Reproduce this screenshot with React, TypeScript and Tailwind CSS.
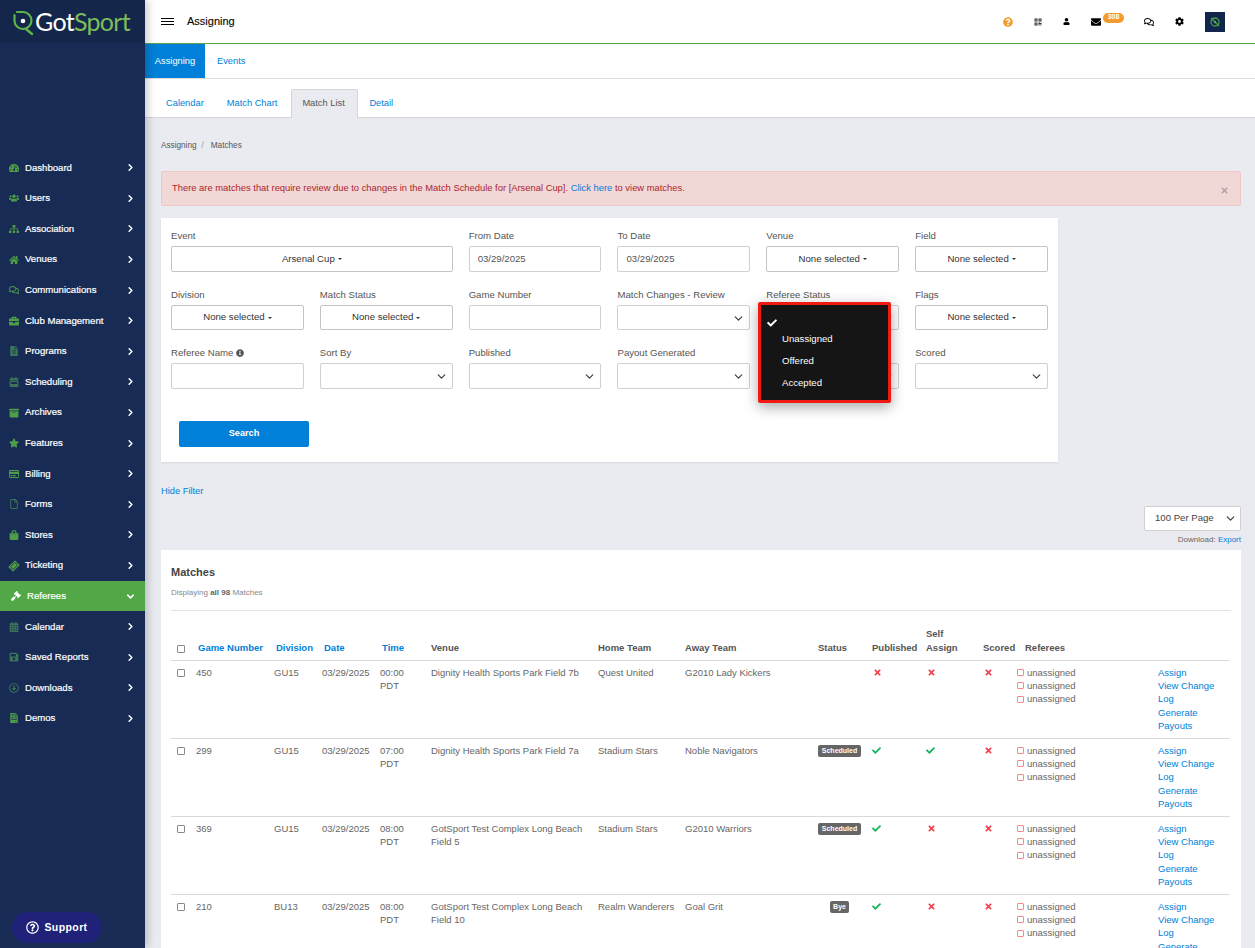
import React from 'react';
import { ChevronDown, ChevronRight } from 'lucide-react';
import {
  FaTachometerAlt, FaUsers, FaSitemap, FaHome, FaRegComments, FaBriefcase, FaFileAlt, FaCalendarWeek,
  FaArchive, FaStar, FaRegCreditCard, FaRegFile, FaShoppingBag, FaTicketAlt, FaGavel, FaCalendarAlt,
  FaSave, FaRegArrowAltCircleDown, FaFileInvoice, FaQuestionCircle, FaQrcode, FaUser, FaEnvelope, FaCog,
  FaCheck, FaTimes, FaInfoCircle, FaRegQuestionCircle,
} from 'react-icons/fa';

const NAV = [
  { label: 'Dashboard', icon: FaTachometerAlt },
  { label: 'Users', icon: FaUsers },
  { label: 'Association', icon: FaSitemap },
  { label: 'Venues', icon: FaHome },
  { label: 'Communications', icon: FaRegComments },
  { label: 'Club Management', icon: FaBriefcase },
  { label: 'Programs', icon: FaFileAlt, dim: true },
  { label: 'Scheduling', icon: FaCalendarWeek, dim: true },
  { label: 'Archives', icon: FaArchive },
  { label: 'Features', icon: FaStar },
  { label: 'Billing', icon: FaRegCreditCard },
  { label: 'Forms', icon: FaRegFile, dim: true },
  { label: 'Stores', icon: FaShoppingBag },
  { label: 'Ticketing', icon: FaTicketAlt, tilt: true },
  { label: 'Referees', icon: FaGavel, active: true },
  { label: 'Calendar', icon: FaCalendarAlt, dim: true },
  { label: 'Saved Reports', icon: FaSave, dim: true },
  { label: 'Downloads', icon: FaRegArrowAltCircleDown, dim: true },
  { label: 'Demos', icon: FaFileInvoice },
];

const MATCHES = [
  { num: '450', div: 'GU15', time: '00:00', venue: 'Dignity Health Sports Park Field 7b', home: 'Quest United', away: 'G2010 Lady Kickers', status: '', pub: false, self: false },
  { num: '299', div: 'GU15', time: '07:00', venue: 'Dignity Health Sports Park Field 7a', home: 'Stadium Stars', away: 'Noble Navigators', status: 'Scheduled', pub: true, self: true },
  { num: '369', div: 'GU15', time: '08:00', venue: 'GotSport Test Complex Long Beach Field 5', home: 'Stadium Stars', away: 'G2010 Warriors', status: 'Scheduled', pub: true, self: false },
  { num: '210', div: 'BU13', time: '08:00', venue: 'GotSport Test Complex Long Beach Field 10', home: 'Realm Wanderers', away: 'Goal Grit', status: 'Bye', pub: true, self: false },
];

const Logo = () => (
  <div className="flex items-center pl-[12px]">
    <svg width="23" height="27" viewBox="0 0 23 27" fill="none">
      <path d="M5 4 H11 A8.5 8.5 0 1 1 2.5 13 V7" stroke="#5cb54a" strokeWidth="2.2" strokeLinecap="round" />
      <circle cx="11" cy="13" r="2.3" fill="#ffffff" />
      <path d="M14 21 L20 26" stroke="#5cb54a" strokeWidth="2.4" strokeLinecap="round" />
    </svg>
    <span className="text-[25px] leading-none tracking-[-0.7px] text-white font-['Lato',sans-serif]">Got</span>
    <span className="text-[25px] leading-none tracking-[-0.7px] text-[#7dbd5b] font-['Lato',sans-serif]">Sport</span>
  </div>
);

const iconTone = (item: { active?: boolean; dim?: boolean }) => {
  if (item.active) return 'text-white';
  return item.dim ? 'text-[#3c7558]' : 'text-[#4f9d48]';
};

const Sidebar = () => (
  <aside className="relative z-10 flex w-[145px] shrink-0 flex-col bg-[#172b55] shadow-[3px_0_8px_rgba(0,0,0,0.2)]">
    <div className="flex h-[43px] items-center bg-[#14274a]">
      <Logo />
    </div>
    <nav className="mt-[109.5px]">
      {NAV.map(item => {
        const Icon = item.icon;
        return (
          <div
            key={item.label}
            className={`flex h-[30.6px] items-center text-[9.6px] font-medium text-white ${item.active ? 'bg-[#52a846] pl-[11px] pr-[9px]' : 'pl-[9px] pr-[9px]'}`}
          >
            <span className={`flex w-[16px] shrink-0 justify-start ${iconTone(item)}`}>
              <Icon size={10} className={item.tilt ? '-rotate-45' : ''} />
            </span>
            <span className="flex-1 [-webkit-text-stroke:0.2px_white]">{item.label}</span>
            {item.active
              ? <ChevronDown size={11} strokeWidth={3.2} />
              : <ChevronRight size={11} strokeWidth={3.2} />}
          </div>
        );
      })}
    </nav>
    <div className="absolute bottom-[5px] left-[12px] flex h-[31px] w-[90px] items-center justify-center gap-[5px] rounded-full bg-[#20227a] text-[10.5px] font-bold tracking-[0.4px] text-white">
      <FaRegQuestionCircle size={13} />
      Support
    </div>
  </aside>
);

const TopBar = () => (
  <header className="flex h-[44px] shrink-0 items-center border-b border-[#5ba548] bg-white pl-[16px]">
    <div className="flex w-[13px] flex-col gap-[1.5px]">
      <span className="h-[1.5px] bg-black" />
      <span className="h-[1.5px] bg-black" />
      <span className="h-[1.5px] bg-black" />
    </div>
    <span className="ml-[13px] text-[11px] text-black [-webkit-text-stroke:0.1px_black]">Assigning</span>
    <div className="ml-auto flex items-center pr-[30px]">
      <FaQuestionCircle size={10} className="text-[#f39c2d]" />
      <FaQrcode size={8} className="ml-[21px] text-[#333333]" />
      <FaUser size={7} className="ml-[21px] text-black" />
      <FaEnvelope size={10} className="ml-[21px] text-black" />
      <span className="relative top-[-4px] ml-[2px] flex h-[10px] w-[21px] items-center justify-center rounded-full bg-[#f39c2d] text-[7px] font-bold text-white">308</span>
      <FaRegComments size={10} className="ml-[20px] text-black" />
      <FaCog size={9} className="ml-[21px] text-black" />
      <div className="ml-[21px] flex h-[20px] w-[20px] items-center justify-center bg-[#12264d]">
        <svg width="12" height="12" viewBox="0 0 12 12" fill="none">
          <circle cx="6" cy="6" r="4" stroke="#4f9d48" strokeWidth="1.3" />
          <circle cx="6" cy="6" r="1.2" fill="#8ab4d8" />
          <path d="M2 2 L10 10" stroke="#4f9d48" strokeWidth="1.2" />
        </svg>
      </div>
    </div>
  </header>
);

const Tabs = () => (
  <>
    <div className="flex h-[35px] shrink-0 items-stretch border-b border-[#dcdcdc] bg-white text-[9.3px]">
      <div className="flex w-[60px] items-center justify-center bg-[#0080d8] pt-[2px] text-white">Assigning</div>
      <div className="flex items-center pl-[12px] pt-[2px] text-[#0080d8]">Events</div>
    </div>
    <div className="flex h-[39px] shrink-0 items-end border-b border-[#d5d5d5] bg-white pl-[9px] text-[9.3px] text-[#0080d8]">
      <div className="flex h-[26px] items-center px-[12px]">Calendar</div>
      <div className="flex h-[26px] items-center pl-[11px] pr-[14px]">Match Chart</div>
      <div className="relative top-[1px] flex h-[29px] w-[67px] items-center rounded-t-[2px] border border-b-0 border-[#d5d5d5] bg-[#e9ebf0] pl-[10px] text-[#555555]">Match List</div>
      <div className="flex h-[26px] items-center px-[11px]">Detail</div>
    </div>
  </>
);

const Field = ({ label, className, children }: { label: React.ReactNode; className?: string; children: React.ReactNode }) => (
  <div className={className}>
    <label className="mb-[4px] block h-[13px] text-[9.6px] leading-[13px] text-[#555555]">{label}</label>
    {children}
  </div>
);

const MultiBtn = ({ text = 'None selected' }: { text?: string }) => (
  <button className="flex h-[25.5px] w-full items-center justify-center gap-[3px] rounded-[2px] border border-[#c4c4c4] bg-white text-[9.6px] text-[#333333]">
    {text}
    <span className="mt-[1px] border-x-[2px] border-t-[2px] border-x-transparent border-t-[#333333]" />
  </button>
);

const TextBox = ({ value = '' }: { value?: string }) => (
  <div className="flex h-[25.5px] items-center rounded-[2px] border border-[#d0d0d0] bg-white px-[8px] text-[9.6px] text-[#555555]">{value}</div>
);

const SelectBox = () => (
  <div className="relative h-[25.5px] rounded-[2px] border border-[#d0d0d0] bg-white">
    <ChevronDown size={13} strokeWidth={2.4} className="absolute right-[4px] top-[6px] text-[#444444]" />
  </div>
);

const StatusMenu = () => (
  <div className="absolute left-[597px] top-[84px] z-20 h-[101px] w-[133px] rounded-[2px] border-[3px] border-[#f01a12] bg-[#151515] text-[9.6px] text-white shadow-[0_4px_14px_rgba(0,0,0,0.35)]">
    <div className="flex h-[23px] items-end pl-[6px]">
      <FaCheck size={10} />
    </div>
    <div className="flex h-[22px] items-center pl-[21px]">Unassigned</div>
    <div className="flex h-[22px] items-center pl-[21px]">Offered</div>
    <div className="flex h-[22px] items-center pl-[21px]">Accepted</div>
  </div>
);

const FilterCard = () => (
  <section className="relative mt-[12px] h-[244px] w-[897px] bg-white px-[10px] pt-[11px] shadow-[0_1px_2px_rgba(0,0,0,0.08)]">
    <div className="grid grid-cols-6 gap-x-[16px] gap-y-[16px]">
      <Field label="Event" className="col-span-2"><MultiBtn text="Arsenal Cup" /></Field>
      <Field label="From Date"><TextBox value="03/29/2025" /></Field>
      <Field label="To Date"><TextBox value="03/29/2025" /></Field>
      <Field label="Venue"><MultiBtn /></Field>
      <Field label="Field"><MultiBtn /></Field>

      <Field label="Division"><MultiBtn /></Field>
      <Field label="Match Status"><MultiBtn /></Field>
      <Field label="Game Number"><TextBox /></Field>
      <Field label="Match Changes - Review"><SelectBox /></Field>
      <Field label="Referee Status"><SelectBox /></Field>
      <Field label="Flags"><MultiBtn /></Field>

      <Field label={<span className="flex items-center gap-[3px]">Referee Name <FaInfoCircle size={8} className="text-[#555555]" /></span>}><TextBox /></Field>
      <Field label="Sort By"><SelectBox /></Field>
      <Field label="Published"><SelectBox /></Field>
      <Field label="Payout Generated"><SelectBox /></Field>
      <Field label=""><SelectBox /></Field>
      <Field label="Scored"><SelectBox /></Field>
    </div>
    <button className="ml-[8px] mt-[32px] flex h-[26px] w-[130px] items-center justify-center rounded-[2px] bg-[#0080d8] text-[9.2px] font-bold text-white">Search</button>
    <StatusMenu />
  </section>
);

const Flag = ({ on }: { on: boolean }) =>
  on ? <FaCheck size={9} className="text-[#17b35c]" /> : <FaTimes size={9} className="ml-[1px] text-[#f2414f]" />;

const TH = 'px-0 pb-[5px] text-left align-bottom font-bold text-[#555555]';
const THLink = 'px-0 pb-[5px] text-left align-bottom font-bold text-[#0080d8]';

const MatchTable = () => (
  <table className="w-[1059px] table-fixed border-collapse text-[9.5px] leading-[13.4px] text-[#666666]">
    <colgroup>
      <col className="w-[25px]" />
      <col className="w-[78px]" />
      <col className="w-[48px]" />
      <col className="w-[58px]" />
      <col className="w-[51px]" />
      <col className="w-[167px]" />
      <col className="w-[87px]" />
      <col className="w-[133px]" />
      <col className="w-[54px]" />
      <col className="w-[54px]" />
      <col className="w-[57px]" />
      <col className="w-[34px]" />
      <col className="w-[141px]" />
      <col className="w-[72px]" />
    </colgroup>
    <thead>
      <tr className="h-[49px] border-b border-[#d9d9d9]">
        <th className="pb-[5px] pl-[6px] text-left align-bottom"><span className="mb-[2px] block h-[8px] w-[8px] rounded-[1px] border border-[#8a8a8a] bg-white" /></th>
        <th className={`${THLink} pl-[2px]`}>Game Number</th>
        <th className={`${THLink} pl-[2px]`}>Division</th>
        <th className={`${THLink} pl-[2px]`}>Date</th>
        <th className={`${THLink} pl-[2px]`}>Time</th>
        <th className={TH}>Venue</th>
        <th className={TH}>Home Team</th>
        <th className={TH}>Away Team</th>
        <th className={TH}>Status</th>
        <th className={TH}>Published</th>
        <th className={TH}><span className="block w-[40px] leading-[14px]">Self Assign</span></th>
        <th className={TH}>Scored</th>
        <th className={`${TH} pl-[8px]`}>Referees</th>
        <th className={TH} />
      </tr>
    </thead>
    <tbody>
      {MATCHES.map(m => (
        <tr key={m.num} className="border-b border-[#d9d9d9] align-top">
          <td className="py-[5px] pl-[6px]"><span className="mt-[3px] block h-[8px] w-[8px] rounded-[1px] border border-[#8a8a8a] bg-white" /></td>
          <td className="py-[5px]">{m.num}</td>
          <td className="py-[5px]">{m.div}</td>
          <td className="py-[5px]">03/29/2025</td>
          <td className="py-[5px]">{m.time} <br />PDT</td>
          <td className="py-[5px] pr-[12px]">{m.venue}</td>
          <td className="py-[5px]">{m.home}</td>
          <td className="py-[5px]">{m.away}</td>
          <td className="py-[5px]">
            {m.status && (
              <span className={`mt-[1px] flex h-[12px] items-center justify-center rounded-[2px] bg-[#666666] text-[7px] font-bold text-white ${m.status === 'Bye' ? 'ml-[12px] w-[19px]' : 'w-[43px]'}`}>{m.status}</span>
            )}
          </td>
          <td className="py-[5px]"><span className="mt-[2px] block"><Flag on={m.pub} /></span></td>
          <td className="py-[5px]"><span className="mt-[2px] block"><Flag on={m.self} /></span></td>
          <td className="py-[5px]"><span className="mt-[2px] block"><Flag on={false} /></span></td>
          <td className="py-[5px]">
            {[0, 1, 2].map(i => (
              <div key={i} className="flex items-center gap-[3px]">
                <span className="h-[7px] w-[7px] shrink-0 rounded-[1px] border border-[#f08a8f]" />
                unassigned
              </div>
            ))}
          </td>
          <td className="py-[5px] text-[#0080d8]">
            <div>Assign</div>
            <div>View Change</div>
            <div>Log</div>
            <div>Generate</div>
            <div>Payouts</div>
          </td>
        </tr>
      ))}
    </tbody>
  </table>
);

export default function App() {
  return (
    <div className="flex h-screen overflow-hidden bg-[#e9ebf0] font-['Liberation_Sans',Arial,sans-serif]">
      <Sidebar />
      <main className="flex min-w-0 flex-1 flex-col overflow-hidden">
        <TopBar />
        <Tabs />
        <div className="px-[16px]">
          <div className="mt-[23px] flex h-[10px] items-center gap-[5px] text-[8.2px] text-[#555555]">
            <span>Assigning</span>
            <span className="text-[#999999]">/</span>
            <span className="ml-[2px]">Matches</span>
          </div>
          <div className="relative mt-[20px] flex h-[35px] w-[1080px] items-center rounded-[2px] border border-[#ecc8c9] bg-[#f2d7d7] px-[10px] text-[9.4px] text-[#a9262d]">
            <span>There are matches that require review due to changes in the Match Schedule for [Arsenal Cup]. <span className="text-[#0080d8]">Click here</span> to view matches.</span>
            <FaTimes size={9} className="absolute right-[11px] top-[14px] text-[#b9a7a7]" />
          </div>
          <FilterCard />
          <div className="mt-[23px] h-[13px] text-[9.3px] leading-[13px] text-[#0080d8]">Hide Filter</div>
          <div className="mt-[8px] flex w-[1080px] justify-end">
            <div className="relative flex h-[25px] w-[97px] items-center rounded-[2px] border border-[#d0d0d0] bg-white pl-[10px] text-[9.6px] text-[#444444]">
              100 Per Page
              <ChevronDown size={13} strokeWidth={2.4} className="absolute right-[3px] top-[5px] text-[#444444]" />
            </div>
          </div>
          <div className="mt-[3px] h-[11px] w-[1080px] text-right text-[8px] leading-[11px] text-[#666666]">Download: <span className="text-[#0080d8]">Export</span></div>
          <section className="mt-[5px] w-[1080px] bg-white px-[10px] pt-[15px]">
            <h2 className="text-[11px] font-bold leading-[14px] text-[#444444]">Matches</h2>
            <p className="mt-[9px] text-[8px] leading-[10px] text-[#888888]">Displaying <b className="text-[#666666]">all 98</b> Matches</p>
            <hr className="mt-[12px] border-[#e2e2e2]" />
            <MatchTable />
          </section>
        </div>
      </main>
    </div>
  );
}
